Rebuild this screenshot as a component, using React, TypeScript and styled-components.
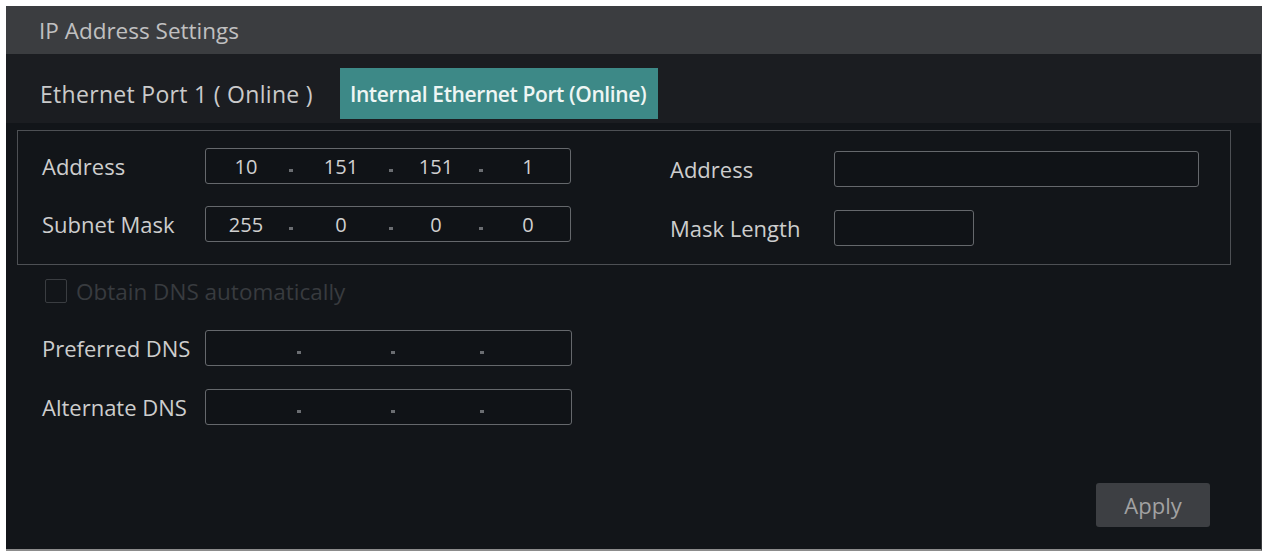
import React from "react";
import styled, { createGlobalStyle } from "styled-components";

const GlobalStyle = createGlobalStyle`
  html, body { margin: 0; padding: 0; background: #ffffff; }
  body { font-family: "Open Sans", "Noto Sans", sans-serif; }
  * { box-sizing: border-box; }
`;

const Page = styled.div`
  width: 1267px;
  height: 553px;
  padding: 6px 5px 2px 6px;
  display: flex;
`;

const Panel = styled.div`
  flex: 1;
  display: flex;
  flex-direction: column;
  background: #121519;
  border-bottom: 2px solid #8c8c8c;
  border-right: 1px solid #3a3c3f;
`;

const Header = styled.div`
  height: 48px;
  flex: none;
  display: flex;
  align-items: center;
  padding-left: 33px;
  background: #3b3d40;
  color: #c0c0c0;
  font-size: 22.5px;
`;

const TabBar = styled.div`
  height: 69px;
  flex: none;
  display: flex;
  align-items: flex-end;
  gap: 15px;
  padding: 0 0 4px 22px;
  background: #1b1d21;
`;

const Tab = styled.div<{ $active?: boolean }>`
  height: 51px;
  display: flex;
  align-items: center;
  padding: ${(p) => (p.$active ? "0 12px 0 10px" : "0 12px")};
  background: ${(p) => (p.$active ? "#3d8987" : "transparent")};
  color: ${(p) => (p.$active ? "#eef6f4" : "#cacaca")};
  font-size: ${(p) => (p.$active ? "21px" : "23px")};
  font-weight: ${(p) => (p.$active ? 600 : 400)};
  letter-spacing: ${(p) => (p.$active ? "-0.4px" : "0.3px")};
  white-space: nowrap;
`;

const Content = styled.div`
  flex: 1;
  display: flex;
  flex-direction: column;
  padding: 7px 30px 22px 11px;
`;

const Fieldset = styled.div`
  height: 135px;
  flex: none;
  display: flex;
  border: 1px solid #4d5054;
`;

const Column = styled.div<{ $top: number; $left: number; $gap: number }>`
  display: flex;
  flex-direction: column;
  gap: ${(p) => p.$gap}px;
  padding-top: ${(p) => p.$top}px;
  padding-left: ${(p) => p.$left}px;
`;

const Row = styled.div<{ $indent?: number }>`
  display: flex;
  align-items: center;
  height: 36px;
  margin-left: ${(p) => p.$indent ?? 0}px;
`;

const Label = styled.div<{ $w: number }>`
  width: ${(p) => p.$w}px;
  flex: none;
  color: #cdcdcd;
  font-size: 22px;
  white-space: nowrap;
`;

const Field = styled.div<{ $w: number }>`
  width: ${(p) => p.$w}px;
  height: 36px;
  display: flex;
  align-items: center;
  border: 1px solid #65686c;
  border-radius: 3px;
  background: #101317;
`;

const Segment = styled.div<{ $w?: number }>`
  ${(p) => (p.$w ? `width: ${p.$w}px; flex: none;` : "flex: 1;")}
  text-align: center;
  color: #d0d0d0;
  font-size: 20px;
`;

const Dot = styled.div`
  width: 10px;
  flex: none;
  height: 100%;
  display: flex;
  align-items: center;
  justify-content: center;
  &::after {
    content: "";
    width: 4px;
    height: 3px;
    margin-top: 8px;
    background: #6a6d71;
  }
`;

const CheckRow = styled.div`
  display: flex;
  align-items: center;
  gap: 9px;
  margin: 13px 0 0 28px;
  height: 26px;
`;

const CheckBox = styled.div`
  width: 22px;
  height: 24px;
  border: 1px solid #3a3d41;
  border-radius: 2px;
`;

const CheckText = styled.span`
  color: #383b3f;
  font-size: 22.5px;
  white-space: nowrap;
`;

const DnsBlock = styled.div`
  display: flex;
  flex-direction: column;
  gap: 23px;
  margin-top: 26px;
`;

const Footer = styled.div`
  margin-top: auto;
  display: flex;
  justify-content: flex-end;
  padding-right: 21px;
`;

const Button = styled.button`
  width: 114px;
  height: 44px;
  border: none;
  border-radius: 3px;
  background: #3d3f43;
  color: #a2a2a2;
  font-family: "Open Sans", "Noto Sans", sans-serif;
  font-size: 22px;
  padding: 0;
`;

type IpProps = { w: number; values?: string[]; widths: number[] };

const IpField = ({ w, values, widths }: IpProps) => (
  <Field $w={w}>
    {widths.map((sw, i) => (
      <React.Fragment key={i}>
        {i > 0 && <Dot />}
        <Segment $w={sw || undefined}>{values ? values[i] : ""}</Segment>
      </React.Fragment>
    ))}
  </Field>
);

const FILLED = [80, 90, 80, 0];
const EMPTY = [88, 84, 79, 0];

export default function App() {
  return (
    <Page>
      <GlobalStyle />
      <Panel>
        <Header>IP Address Settings</Header>
        <TabBar>
          <Tab>Ethernet Port 1 ( Online )</Tab>
          <Tab $active>Internal Ethernet Port (Online)</Tab>
        </TabBar>
        <Content>
          <Fieldset>
            <Column $top={17} $left={24} $gap={22}>
              <Row>
                <Label $w={163}>Address</Label>
                <IpField w={366} values={["10", "151", "151", "1"]} widths={FILLED} />
              </Row>
              <Row>
                <Label $w={163}>Subnet Mask</Label>
                <IpField w={366} values={["255", "0", "0", "0"]} widths={FILLED} />
              </Row>
            </Column>
            <Column $top={20} $left={99} $gap={23}>
              <Row>
                <Label $w={164}>Address</Label>
                <Field $w={365} />
              </Row>
              <Row>
                <Label $w={164}>Mask Length</Label>
                <Field $w={140} />
              </Row>
            </Column>
          </Fieldset>
          <CheckRow>
            <CheckBox />
            <CheckText>Obtain DNS automatically</CheckText>
          </CheckRow>
          <DnsBlock>
            <Row $indent={25}>
              <Label $w={163}>Preferred DNS</Label>
              <IpField w={367} widths={EMPTY} />
            </Row>
            <Row $indent={25}>
              <Label $w={163}>Alternate DNS</Label>
              <IpField w={367} widths={EMPTY} />
            </Row>
          </DnsBlock>
          <Footer>
            <Button>Apply</Button>
          </Footer>
        </Content>
      </Panel>
    </Page>
  );
}
